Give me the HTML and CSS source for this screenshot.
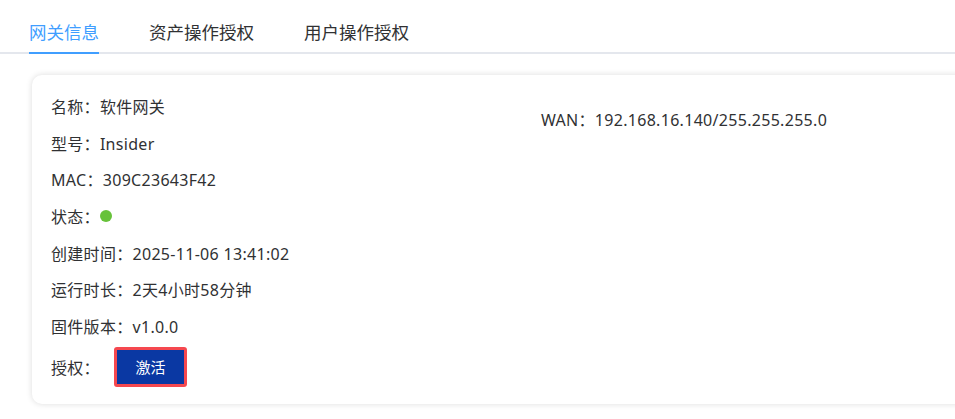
FILE: index.html
```html
<!DOCTYPE html>
<html lang="zh-CN">
<head>
<meta charset="utf-8">
<title>网关信息</title>
<link rel="stylesheet" href="styles.css">
</head>
<body>
<div class="tabs">
  <div class="tab active">网关信息</div>
  <div class="tab">资产操作授权</div>
  <div class="tab">用户操作授权</div>
</div>
<div class="card">
  <div class="col left">
    <div class="row">名称：软件网关</div>
    <div class="row">型号：Insider</div>
    <div class="row">MAC：309C23643F42</div>
    <div class="row">状态：<span class="dot"></span></div>
    <div class="row">创建时间：2025-11-06 13:41:02</div>
    <div class="row">运行时长：2天4小时58分钟</div>
    <div class="row">固件版本：v1.0.0</div>
    <div class="row btn-row">授权：<span class="btn-wrap"><button class="btn">激活</button></span></div>
  </div>
  <div class="col right">
    <div class="row">WAN：192.168.16.140/255.255.255.0</div>
  </div>
</div>
</body>
</html>
```

FILE: styles.css
```css
html, body {
  margin: 0;
  padding: 0;
  background: #ffffff;
  overflow: hidden;
}
body {
  font-family: "Noto Sans", "Noto Sans CJK SC", sans-serif;
  color: #303133;
  width: 955px;
  height: 419px;
}
.tabs {
  display: flex;
  gap: 50px;
  padding-left: 29px;
  height: 52px;
  border-bottom: 2px solid #e4e7ed;
}
.tab {
  position: relative;
  font-size: 17.5px;
  line-height: 40px;
  padding-top: 12px;
  color: #303133;
}
.tab.active {
  color: #409eff;
}
.tab.active::after {
  content: "";
  position: absolute;
  left: 0;
  right: 0;
  bottom: -2px;
  height: 2px;
  background: #409eff;
}
.card {
  margin: 21px 0 0 32px;
  width: 960px;
  box-sizing: border-box;
  padding: 12.7px 19px 14px;
  background: #fff;
  border-radius: 10px;
  box-shadow: 0 0 6px rgba(0, 0, 0, 0.14);
  display: flex;
}
.col.left {
  width: 490px;
}
.col.right {
  padding-top: 13px;
}
.row {
  height: 36.67px;
  display: flex;
  align-items: center;
  font-size: 16px;
  letter-spacing: 0.3px;
  white-space: nowrap;
}
.dot {
  display: inline-block;
  width: 12px;
  height: 12px;
  border-radius: 50%;
  background: #67c23a;
}
.btn-row {
  height: 45.4px;
}
.btn-wrap {
  display: inline-flex;
  margin-left: 14px;
  border: 3px solid #f5484f;
  border-radius: 3px;
}
.btn {
  width: 67px;
  height: 34px;
  border: none;
  margin: 0;
  padding: 0;
  background: #0a38a3;
  color: #ffffff;
  font-family: "Noto Sans CJK SC", sans-serif;
  font-size: 15px;
  letter-spacing: 0;
}
```
